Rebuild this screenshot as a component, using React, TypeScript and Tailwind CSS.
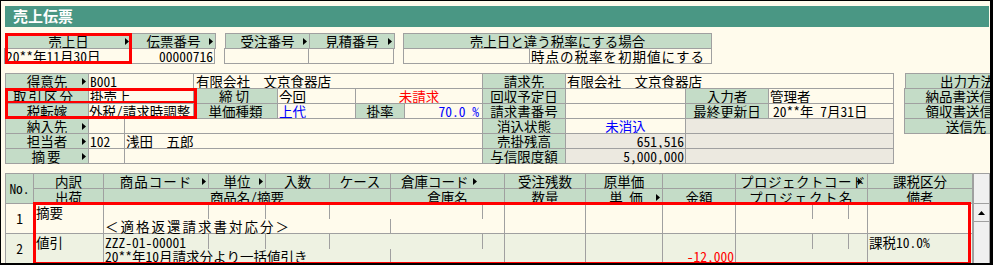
import React from "react";

type CP = { w: string; className?: string; children?: React.ReactNode };

const G = "bg-[#c4dcc7]";
const GRAY = "bg-[#ece9e0]";

function Arrow({ className = "" }: { className?: string }) {
  return (
    <svg width="4" height="7" viewBox="0 0 4 7" className={"shrink-0 " + className}>
      <polygon points="0,0 4,3.5 0,7" fill="#000" />
    </svg>
  );
}

function Cell({ w, className = "", children }: CP) {
  return (
    <div
      className={`${w} h-[16px] -ml-px first:ml-0 shrink-0 border border-[#a0a0a0] flex items-center whitespace-nowrap leading-[14px] ${className}`}
    >
      {children}
    </div>
  );
}

function Lbl({ children, arrow, className = "" }: { children: React.ReactNode; arrow?: boolean; className?: string }) {
  return (
    <>
      <span className={`flex-1 text-center ${arrow ? "pl-[6px]" : ""} ${className}`}>{children}</span>
      {arrow && <Arrow className="mr-[2px]" />}
    </>
  );
}

function HCell({ w, className = "", children }: CP) {
  return (
    <div
      className={`${w} h-full shrink-0 border-r border-b border-[#a0a0a0] flex items-center whitespace-nowrap leading-[14px] ${className}`}
    >
      {children}
    </div>
  );
}

function BCell({ w, className = "", children }: CP) {
  return (
    <div
      className={`${w} h-full shrink-0 border-r border-[#a0a0a0] flex items-center whitespace-nowrap leading-[14px] ${className}`}
    >
      {children}
    </div>
  );
}

function BodyRow({
  no,
  bg,
  kind,
  code,
  name,
  amount,
  tax,
}: {
  no: string;
  bg: string;
  kind: string;
  code?: string;
  name?: React.ReactNode;
  amount?: string;
  tax?: string;
}) {
  return (
    <div className={`flex h-[30px] border-b border-[#a0a0a0] ${bg}`}>
      <div className="w-[28px] shrink-0 border-r border-[#a0a0a0] flex items-center justify-center">{no}</div>
      <div className="flex flex-col">
        <div className="flex h-[15px]">
          <BCell w="w-[70px]" className="pl-[2px]">{kind}</BCell>
          <BCell w="w-[105px]" className="pl-[1px]">{code}</BCell>
          <BCell w="w-[57px]" />
          <BCell w="w-[64px]" />
          <div className="w-[61px] shrink-0" />
          <BCell w="w-[92px]" />
          <BCell w="w-[22px]" />
          <BCell w="w-[81px]" />
          <BCell w="w-[77px]" />
          <BCell w="w-[73px]" />
          <BCell w="w-[77px]" />
          <BCell w="w-[36px]" />
          <BCell w="w-[19px]" />
          <BCell w="w-[105px]" className="pl-[1px]">{tax}</BCell>
        </div>
        <div className="flex h-[14px]">
          <BCell w="w-[70px]" />
          <BCell w="w-[287px]" className="pl-[1px]">{name}</BCell>
          <BCell w="w-[114px]" />
          <BCell w="w-[81px]" />
          <BCell w="w-[77px]" />
          <BCell w="w-[73px]" className="justify-end pr-[1px] text-[#ff0000]">{amount}</BCell>
          <BCell w="w-[132px]" />
          <BCell w="w-[105px]" />
        </div>
      </div>
    </div>
  );
}

export default function App() {
  return (
    <div className="w-[993px] h-[265px] bg-black">
      <div className="w-[991px] h-[264px] border border-black bg-[#fffbec] overflow-hidden pl-[4px] pt-[5px] text-[13.5px] text-black font-['Noto_Sans_Mono_CJK_JP','Noto_Sans_CJK_JP',monospace]">
        {/* Title bar */}
        <div className="w-[984px] h-[21px] bg-[#4a9784] flex items-center pl-[8px] text-white font-bold text-[15px] font-['Noto_Sans_CJK_JP',sans-serif]">
          売上伝票
        </div>

        {/* Row 1 */}
        <div className="mt-[6px] flex">
          <div className="relative flex">
            <div className="flex flex-col">
              <Cell w="w-[127px]" className={G}>
                <Lbl arrow>売上日</Lbl>
              </Cell>
              <Cell w="w-[127px]" className="-mt-px pl-[1px]">20**年11月30日</Cell>
            </div>
            <div className="absolute inset-0 border-[3px] border-[#ff0000] pointer-events-none" />
          </div>
          <div className="flex flex-col -ml-px">
            <Cell w="w-[85px]" className={G}>
              <Lbl arrow>伝票番号</Lbl>
            </Cell>
            <Cell w="w-[85px]" className="-mt-px justify-end pr-[1px]">00000716</Cell>
          </div>

          <div className="flex flex-col ml-[9px]">
            <Cell w="w-[85px]" className={G}>
              <Lbl arrow>受注番号</Lbl>
            </Cell>
            <Cell w="w-[85px]" className="-mt-px" />
          </div>
          <div className="flex flex-col -ml-px">
            <Cell w="w-[86px]" className={G}>
              <Lbl arrow>見積番号</Lbl>
            </Cell>
            <Cell w="w-[86px]" className="-mt-px" />
          </div>

          <div className="flex flex-col ml-[8px]">
            <Cell w="w-[309px]" className={G + " justify-center"}>
              売上日と違う税率にする場合
            </Cell>
            <div className="flex -mt-px">
              <Cell w="w-[127px]" />
              <Cell w="w-[183px]" className="pl-[1px] tracking-[1px]">時点の税率を初期値にする</Cell>
            </div>
          </div>
        </div>

        {/* Block 2 */}
        <div className="mt-[9px] flex">
          <div className="flex flex-col">
            <div className="flex">
              <Cell w="w-[84px]" className={G}>
                <Lbl arrow>得意先</Lbl>
              </Cell>
              <Cell w="w-[106px]" className="pl-[1px]">B001</Cell>
              <Cell w="w-[290px]" className="pl-[2px]">有限会社　文京食器店</Cell>
              <Cell w="w-[84px]" className={G + " justify-center"}>請求先</Cell>
              <Cell w="w-[329px]" className="pl-[1px]">有限会社　文京食器店</Cell>
            </div>
            <div className="flex -mt-px">
              <div className="relative flex">
                <Cell w="w-[84px]" className={G}>
                  <Lbl className="tracking-[2px] -ml-[6px]">取引区分</Lbl>
                </Cell>
                <Cell w="w-[106px]" className="pl-[1px]">掛売上</Cell>
                <div className="absolute left-0 top-0 w-[192px] h-[16px] border-[3px] border-[#ff0000] pointer-events-none" />
              </div>
              <Cell w="w-[85px]" className={G}>
                <Lbl className="tracking-[3px]">締切</Lbl>
              </Cell>
              <Cell w="w-[79px]" className="pl-[1px]">今回</Cell>
              <Cell w="w-[128px]" className="justify-center text-[#ff0000]">未請求</Cell>
              <Cell w="w-[84px]" className={G + " justify-center"}>回収予定日</Cell>
              <Cell w="w-[121px]" />
              <Cell w="w-[84px]" className={G + " justify-center"}>入力者</Cell>
              <Cell w="w-[126px]" className="pl-[1px]">管理者</Cell>
            </div>
            <div className="flex -mt-px">
              <div className="relative flex">
                <Cell w="w-[84px]" className={G}>
                  <Lbl>税転嫁</Lbl>
                </Cell>
                <Cell w="w-[106px]">外税/請求時調整</Cell>
                <div className="absolute left-0 top-0 w-[192px] h-[16px] border-[3px] border-t-0 border-[#ff0000] pointer-events-none" />
              </div>
              <Cell w="w-[85px]" className={G + " justify-center"}>単価種類</Cell>
              <Cell w="w-[79px]" className="pl-[1px] text-[#0000ff]">上代</Cell>
              <Cell w="w-[50px]" className={G + " justify-center"}>掛率</Cell>
              <Cell w="w-[79px]" className="justify-end pr-[3px] text-[#0000ff]">70.0 %</Cell>
              <Cell w="w-[84px]" className={G + " justify-center"}>請求書番号</Cell>
              <Cell w="w-[121px]" />
              <Cell w="w-[84px]" className={G + " justify-center"}>最終更新日</Cell>
              <Cell w="w-[126px]" className="pl-[4px]">20**年 7月31日</Cell>
            </div>
            <div className="flex -mt-px">
              <Cell w="w-[84px]" className={G}>
                <Lbl arrow>納入先</Lbl>
              </Cell>
              <Cell w="w-[37px]" />
              <Cell w="w-[359px]" />
              <Cell w="w-[84px]" className={G + " justify-center"}>消込状態</Cell>
              <Cell w="w-[121px]" className="justify-center text-[#0000ff]">未消込</Cell>
              <Cell w="w-[209px]" className={GRAY} />
            </div>
            <div className="flex -mt-px">
              <Cell w="w-[84px]" className={G}>
                <Lbl arrow>担当者</Lbl>
              </Cell>
              <Cell w="w-[37px]" className="pl-[1px]">102</Cell>
              <Cell w="w-[359px]" className="pl-[1px]">浅田　五郎</Cell>
              <Cell w="w-[84px]" className={G + " justify-center"}>売掛残高</Cell>
              <Cell w="w-[121px]" className={GRAY + " justify-end pr-[1px]"}>651,516</Cell>
              <Cell w="w-[209px]" className={GRAY} />
            </div>
            <div className="flex -mt-px">
              <Cell w="w-[84px]" className={G}>
                <Lbl arrow className="tracking-[2px]">摘要</Lbl>
              </Cell>
              <Cell w="w-[37px]" />
              <Cell w="w-[359px]" />
              <Cell w="w-[84px]" className={G + " justify-center"}>与信限度額</Cell>
              <Cell w="w-[121px]" className={GRAY + " justify-end pr-[1px]"}>5,000,000</Cell>
              <Cell w="w-[209px]" className={GRAY} />
            </div>
          </div>

          <div className="flex flex-col ml-[11px]">
            <Cell w="w-[124px]" className={G + " justify-center"}>出力方法</Cell>
            <Cell w="w-[124px]" className={G + " justify-center -mt-px"}>納品書送信紙</Cell>
            <Cell w="w-[124px]" className={G + " justify-center -mt-px"}>領収書送信紙</Cell>
            <Cell w="w-[124px]" className={G + " justify-center -mt-px"}>送信先</Cell>
          </div>
        </div>

        {/* Table */}
        <div className="mt-[9px] flex">
          <div className="relative flex flex-col w-[968px] border-l border-t border-[#a0a0a0]">
            <div className={`flex h-[30px] ${G}`}>
              <div className="w-[28px] shrink-0 border-r border-b border-[#a0a0a0] flex items-center justify-center">
                No.
              </div>
              <div className="flex flex-col">
                <div className="flex h-[15px]">
                  <HCell w="w-[70px]" className="justify-center">内訳</HCell>
                  <HCell w="w-[105px]">
                    <Lbl arrow className="tracking-[1px]">商品コード</Lbl>
                  </HCell>
                  <HCell w="w-[57px]">
                    <Lbl arrow>単位</Lbl>
                  </HCell>
                  <HCell w="w-[64px]" className="justify-center">入数</HCell>
                  <HCell w="w-[61px]" className="justify-center">ケース</HCell>
                  <HCell w="w-[114px]" className="pl-[10px]">
                    倉庫コード
                    <Arrow className="ml-[4px]" />
                  </HCell>
                  <HCell w="w-[81px]" className="justify-center">受注残数</HCell>
                  <HCell w="w-[77px]" className="justify-center">原単価</HCell>
                  <HCell w="w-[73px]" />
                  <HCell w="w-[132px]" className="relative pl-[4px] tracking-[0.5px]">
                    プロジェクトコード
                    <Arrow className="absolute right-[5px] top-[4px]" />
                  </HCell>
                  <HCell w="w-[105px]" className="justify-center">課税区分</HCell>
                </div>
                <div className="flex h-[15px] items-end">
                  <HCell w="w-[70px]" className="justify-center pt-[2px] overflow-hidden">出荷</HCell>
                  <HCell w="w-[287px]" className="justify-center pt-[2px] overflow-hidden">商品名/摘要</HCell>
                  <HCell w="w-[114px]" className="justify-center pt-[2px] overflow-hidden">倉庫名</HCell>
                  <HCell w="w-[81px]" className="justify-center pt-[2px] overflow-hidden">数量</HCell>
                  <HCell w="w-[77px]" className="pt-[2px] overflow-hidden">
                    <Lbl arrow className="pl-[10px]">単 価</Lbl>
                  </HCell>
                  <HCell w="w-[73px]" className="justify-center pt-[2px] overflow-hidden">金額</HCell>
                  <HCell w="w-[132px]" className="justify-center pt-[2px] tracking-[1.5px] overflow-hidden">プロジェクト名</HCell>
                  <HCell w="w-[105px]" className="justify-center pt-[2px] overflow-hidden">備考</HCell>
                </div>
              </div>
            </div>

            <BodyRow
              no="1"
              bg="bg-[#fffbec]"
              kind="摘要"
              name={<span className="tracking-[2px]">＜適格返還請求書対応分＞</span>}
            />
            <BodyRow
              no="2"
              bg="bg-[#eef2e2]"
              kind="値引"
              code="ZZZ-01-00001"
              name="20**年10月請求分より一括値引き"
              amount="-12,000"
              tax="課税10.0%"
            />

            <div className="absolute left-[27px] top-[28px] w-[938px] h-[63px] border-[3px] border-[#ff0000] pointer-events-none" />
          </div>

          {/* Scrollbar */}
          <div className="w-[17px] shrink-0 flex flex-col">
            <div className="h-[31px] border border-[#a0a0a0] bg-[#f0f0f0]" />
            <div className="h-[19px] -mt-px border border-[#a0a0a0] bg-[#f0f0f0] flex items-center justify-center">
              <svg width="7" height="4" viewBox="0 0 7 4">
                <polygon points="0,4 3.5,0 7,4" fill="#000" />
              </svg>
            </div>
            <div className="h-[60px] -mt-px border border-[#a0a0a0] bg-[#f0f0f0]" />
          </div>
        </div>
      </div>
    </div>
  );
}
